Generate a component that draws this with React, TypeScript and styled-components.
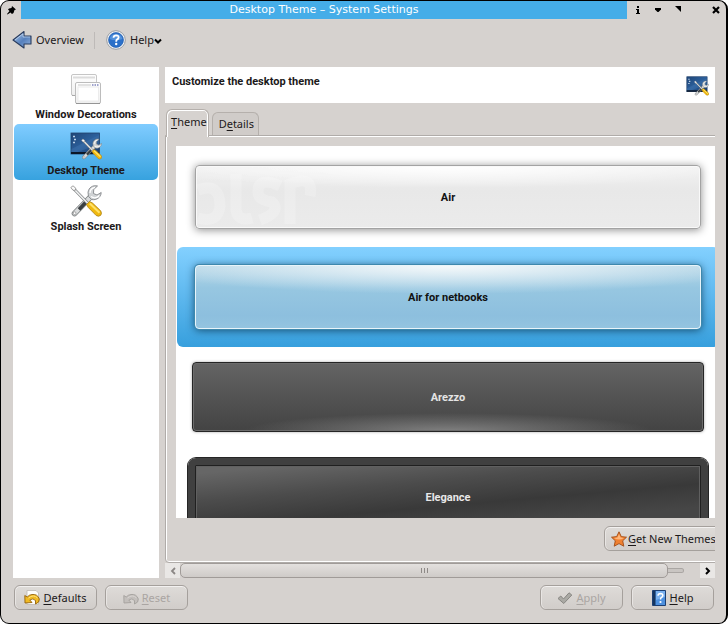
import React, { useState } from 'react';
import styled, { createGlobalStyle, css } from 'styled-components';

const GlobalStyle = createGlobalStyle`
  * { box-sizing: border-box; }
  body { margin: 0; background: #fff; }
  button { font: inherit; color: inherit; background: none; border: 0; padding: 0; margin: 0; white-space: nowrap; }
  h1, h2 { margin: 0; font: inherit; }
  svg { display: block; flex: none; }
  u { text-underline-offset: 2px; }
`;

const boldText = css`
  font: 700 11px/18px Roboto, "Noto Sans", sans-serif;
`;

const Window = styled.div`
  height: 100vh;
  min-height: 480px;
  display: flex;
  flex-direction: column;
  border: 1px solid #000;
  border-right-width: 2px;
  border-radius: 9px;
  overflow: hidden;
  background: #d6d2cf;
  color: #1c191a;
  font: 11px/16px "Noto Sans", "Open Sans", sans-serif;
`;

const TitleBar = styled.header`
  display: flex;
  align-items: center;
  height: 18px;
  flex: none;
`;

const TitleButton = styled.button`
  width: 20px;
  height: 18px;
  display: flex;
  align-items: center;
  justify-content: center;
`;

const TitleText = styled.h1`
  && {
    flex: 1;
    height: 18px;
    text-align: center;
    background: #45ade8;
    color: #fff;
    font: 11px/18px "DejaVu Sans", sans-serif;
  }
`;

const TitleActions = styled.div`
  display: flex;
  width: 99px;
  padding-left: 1px;
`;

const Toolbar = styled.nav`
  display: flex;
  align-items: center;
  height: 42px;
  flex: none;
  padding-left: 11px;
`;

const ToolButton = styled.button`
  display: flex;
  align-items: center;
  gap: 4px;
`;

const ToolDivider = styled.span`
  width: 1px;
  height: 17px;
  margin: 0 11px 0 10px;
  background: #bebab8;
`;

const Main = styled.main`
  flex: 1;
  min-height: 0;
  display: flex;
  gap: 6px;
  padding: 6px 11px 0 12px;
`;

const Sidebar = styled.nav`
  width: 146px;
  flex: none;
  padding: 1px;
  background: #fff;
`;

const SideItem = styled.button<{ $selected?: boolean }>`
  display: flex;
  flex-direction: column;
  align-items: center;
  justify-content: flex-end;
  width: 100%;
  height: 56px;
  gap: 1px;
  border-radius: 5px;
  background: ${p => (p.$selected ? 'linear-gradient(#80ccff, #37a2df)' : 'none')};
  && { ${boldText} }
`;

const Content = styled.section`
  flex: 1;
  min-width: 0;
  display: flex;
  flex-direction: column;
`;

const ModuleHeader = styled.div`
  display: flex;
  justify-content: space-between;
  height: 36px;
  flex: none;
  padding: 6px 6px 0 7px;
  background: #fff;
`;

const ModuleTitle = styled.h2`
  && { ${boldText} }
`;

const HeaderIcon = styled.div`
  padding-top: 3px;
`;

const TabRow = styled.div`
  display: flex;
  align-items: flex-end;
  gap: 3px;
  height: 32px;
  flex: none;
  padding-left: 1px;
`;

const Tab = styled.button<{ $active?: boolean }>`
  height: 23px;
  padding: 0 4px 0 6px;
  border: 1px solid #b5b0ac;
  border-bottom: 0;
  border-radius: 6px 6px 0 0;
  background: #d0ccc9;
  ${p =>
    p.$active &&
    css`
      height: 28px;
      padding: 0 1px 3px 4px;
      margin-bottom: -2px;
      background: #d6d2cf;
      box-shadow: inset 1px 1px #fff, inset -1px 0 #fff;
      z-index: 1;
    `}
`;

const PaneClip = styled.div`
  flex: 1;
  min-height: 0;
  display: flex;
  overflow: hidden;
`;

const Pane = styled.div`
  flex: none;
  width: calc(100% + 15px);
  display: flex;
  flex-direction: column;
  padding: 10px 10px 11px;
  border: 1px solid #b0aca9;
  border-radius: 0 0 0 4px;
  box-shadow: inset 1px 1px #fff, inset 0 -1px #fff;
`;

const ThemeList = styled.div`
  flex: 1;
  min-height: 0;
  padding: 1px 0 0 1px;
  overflow: hidden;
  background: #fff;
`;

const ThemeRow = styled.button<{ $selected: boolean }>`
  display: flex;
  width: 100%;
  height: 100px;
  border-radius: 6px;
  background: ${p => (p.$selected ? 'linear-gradient(#83d0ff, #379fdd)' : 'none')};
`;

type Look = 'air' | 'netbook' | 'arezzo' | 'elegance';

const looks = {
  air: css`
    margin: 18px;
    border: 1px solid #a3a3a3;
    border-radius: 4px;
    background: radial-gradient(ellipse 60% 22px at 50% 0, #fff, rgba(255, 255, 255, 0)),
      linear-gradient(#f2f2f2, #e8e8e8 40%, #ebebeb);
    box-shadow: 0 1px 8px rgba(0, 0, 0, 0.45), inset 0 0 0 1px #f9f9f9;
  `,
  netbook: css`
    margin: 18px;
    border: 1px solid #e8f4fa;
    border-radius: 4px;
    background: radial-gradient(ellipse 62% 28px at 50% 0, #f4f8fa, rgba(220, 235, 243, 0)),
      linear-gradient(#b8d8e8, #97c7e1 35%, #8dbfde 80%, #94c4e0);
    box-shadow: 0 0 0 1px #3e88ad, 0 1px 9px rgba(0, 36, 60, 0.75);
  `,
  arezzo: css`
    margin: 15px;
    border: 1px solid #252525;
    border-radius: 4px;
    color: #e4e4e4;
    background: radial-gradient(ellipse 40% 18px at 50% 100%, #808080, rgba(100, 100, 100, 0)),
      linear-gradient(#646464, #434343);
    box-shadow: 0 0 3px rgba(0, 0, 0, 0.35), inset 0 0 0 1px #6c6c6c;
  `,
  elegance: css`
    margin: 11px;
    border: 7px solid #404040;
    border-radius: 8px;
    color: #e8e8e8;
    background: linear-gradient(175deg, #666 8%, #4c4c4c 34%, #393939 58%, #464646 80%);
    box-shadow: inset 0 0 0 1px #202020, inset 0 0 0 2px #606060, 0 0 0 1px #252525;
  `,
};

const ThemeCard = styled.span<{ $look: Look }>`
  position: relative;
  flex: 1;
  display: flex;
  align-items: center;
  justify-content: center;
  overflow: hidden;
  padding-top: 2px;
  color: #111;
  ${boldText}
  ${p => looks[p.$look]}
`;

const Watermark = styled.svg`
  position: absolute;
  left: 0;
  top: 0;
`;

const PaneFooter = styled.div`
  display: flex;
  justify-content: flex-end;
  flex: none;
  padding-top: 8px;
  margin-right: -10px;
`;

const PushButton = styled.button<{ $wide?: boolean }>`
  display: flex;
  align-items: center;
  justify-content: center;
  gap: 3px;
  width: ${p => (p.$wide ? '125px' : '83px')};
  height: 25px;
  border: 1px solid #a5a09c;
  border-radius: 6px;
  background: linear-gradient(#dedbd8, #d1cdca);
  box-shadow: inset 0 1px #f3f1f0, inset 1px 0 #e8e5e3;
  ${p => p.$wide && css`justify-content: flex-start; gap: 1px; padding-left: 6px;`}
  &:disabled { color: #aaa5a2; }
`;

const ScrollBar = styled.div`
  display: flex;
  align-items: center;
  height: 15px;
  flex: none;
`;

const ScrollArrow = styled.button`
  display: flex;
  align-items: center;
  justify-content: center;
  width: 15px;
  height: 15px;
  flex: none;
  background: #e9e7e5;
`;

const ScrollTrack = styled.div`
  flex: 1;
  display: flex;
  align-items: center;
`;

const ScrollThumb = styled.div`
  flex: 1;
  display: flex;
  align-items: center;
  justify-content: center;
  gap: 2px;
  height: 15px;
  border: 1px solid #a09b98;
  border-radius: 5px;
  background: linear-gradient(#e3e0de, #cfcbc8);
`;

const Grip = styled.i`
  width: 1px;
  height: 5px;
  background: #8e8a87;
`;

const ScrollGroove = styled.div`
  width: 16px;
  height: 5px;
  margin-right: 16px;
  border: 1px solid #aaa6a3;
  border-left: 0;
  border-radius: 0 3px 3px 0;
  background: #c9c5c2;
`;

const Footer = styled.footer`
  display: flex;
  gap: 8px;
  flex: none;
  padding: 7px 12px 13px 13px;
`;

const Spacer = styled.span`
  flex: 1;
`;

const Tools = () => (
  <>
    <path d="M4.500 28.500 L20 12.500" stroke="#7c8082" strokeWidth="5.600" strokeLinecap="round" />
    <path d="M4.500 28.500 L20 12.500" stroke="#d9dbdc" strokeWidth="4" strokeLinecap="round" />
    <path d="M9 24.500 L17 16" stroke="#3a3f42" strokeWidth="3.600" />
    <circle cx="4.600" cy="28.200" r="1.400" fill="#fff" stroke="#888" strokeWidth=".7" />
    <path
      d="M27.500 1 C23 -.2 18.500 2.500 18 7.500 L18.500 11.500 L21.500 14.500 C26.500 15.500 31 12.500 31.200 7.500 L27 10 L23.500 8.500 L23.700 4.500 Z"
      fill="#cfd2d4"
      stroke="#84888b"
      strokeWidth=".9"
      strokeLinejoin="round"
    />
    <path d="M20 8 C20 5 22 3 25 2.400 M21 11.500 C24 13.600 27.500 13 29.300 10.500" fill="none" stroke="#fff" strokeWidth="1.300" />
    <path d="M3 3 L18 18.500" stroke="#808486" strokeWidth="3" />
    <path d="M3 3 L18 18.500" stroke="#f0f1f1" strokeWidth="1.700" />
    <path d="M.8 2.500 L3 .8 L5.800 3.200 L5.300 5.300 L3 5.300 Z" fill="#fafafa" stroke="#8c8c8c" strokeWidth=".8" />
    <path d="M16.500 19.500 L19.500 16.500 L22.500 18 L30.700 25.800 Q32.300 28.500 30.600 30.400 Q28.500 32 26.200 30.500 L18.300 22.500 Z" fill="#f0b90e" stroke="#a9801c" strokeWidth=".8" />
    <path d="M19.800 18.600 L29.500 27.800" stroke="#ffe26a" strokeWidth="2" />
  </>
);

const WindowsIcon = () => (
  <svg width="32" height="32" viewBox="0 0 32 32">
    <defs>
      <linearGradient id="pane" x1="0" y1="0" x2="0" y2="1">
        <stop offset="0" stopColor="#fff" />
        <stop offset="1" stopColor="#efefef" />
      </linearGradient>
    </defs>
    <rect x="1.500" y="1.500" width="25" height="21" rx="1.500" fill="url(#pane)" stroke="#c6c6c6" />
    <path d="M3 4.500h22" stroke="#dcdcdc" strokeWidth="2" />
    <path d="M2 22.500h24" stroke="#aaa" />
    <rect x="5.500" y="9.500" width="25" height="21" rx="1.500" fill="url(#pane)" stroke="#bcbcbc" />
    <rect x="8" y="14" width="20.500" height="14" fill="#fff" stroke="#ececec" />
    <path d="M8 12h13" stroke="#e2e2e2" strokeWidth="2" />
    <path d="M22 12h1.500m1 0h1.500m1 0h1.500" stroke="#9fa3cc" strokeWidth="1.800" />
    <path d="M6 30.500h24" stroke="#959595" />
  </svg>
);

const DesktopIcon = ({ width, height }: { width: number; height: number }) => (
  <svg width={width} height={height} viewBox="0 0 32 28">
    <defs>
      <linearGradient id="desk" x1="0" y1="0" x2="1" y2="1">
        <stop offset="0" stopColor="#1f4677" />
        <stop offset=".5" stopColor="#2c5f9b" />
        <stop offset="1" stopColor="#16386a" />
      </linearGradient>
    </defs>
    <rect x="1" y="1" width="28.500" height="21" fill="url(#desk)" stroke="#24436c" strokeWidth=".8" />
    <path d="M1.500 17 L29 3 V12 L8 20 H1.500z" fill="#4379b2" opacity=".4" />
    <path d="M3 4.500h2m-1 3h2m-3 3h2" stroke="#bfd2e8" strokeWidth="1.500" />
    <path d="M1 21h28" stroke="#0c1728" strokeWidth="1.800" />
    <g transform="translate(11 6.500) scale(.66)">
      <Tools />
    </g>
  </svg>
);

const BackIcon = () => (
  <svg width="20" height="20" viewBox="0 0 20 20">
    <defs>
      <linearGradient id="arrow" x1="0" y1="0" x2="1" y2="1">
        <stop offset="0" stopColor="#b4cdec" />
        <stop offset=".55" stopColor="#5680bd" />
        <stop offset="1" stopColor="#94b4dd" />
      </linearGradient>
    </defs>
    <path d="M1 10 L12 1.500 V6 H19 V14 H12 V18 Z" fill="url(#arrow)" stroke="#2a3c5e" strokeWidth="1.100" strokeLinejoin="round" />
    <path d="M3 10 L11 3.800 V7 H18" fill="none" stroke="#d5e5f8" strokeWidth=".6" />
  </svg>
);

const HelpIcon = () => (
  <svg width="20" height="20" viewBox="0 0 20 20">
    <circle cx="10" cy="10" r="9.300" fill="#f6f7f8" stroke="#8e949b" strokeWidth=".9" />
    <circle cx="10" cy="10" r="7.500" fill="#2b70c9" stroke="#1d58a8" strokeWidth=".6" />
    <path d="M3.500 9 A6.700 6.700 0 0 1 16.500 9 Q10 11.500 3.500 9" fill="#6ea9ea" opacity=".6" />
    <path d="M7.500 7.700 Q7.700 5.300 10.100 5.300 Q12.700 5.400 12.600 7.500 Q12.400 8.900 10.900 9.600 Q10.200 10.100 10.200 11.700" fill="none" stroke="#fff" strokeWidth="1.800" />
    <circle cx="10.200" cy="14" r="1.200" fill="#fff" />
  </svg>
);

const UndoIcon = ({ muted }: { muted?: boolean }) => (
  <svg width="16" height="16" viewBox="0 0 16 16">
    {!muted && <path d="M3 .500 H12 L14.500 3 V14.500 H3 Z" fill="#fdfdfc" stroke="#bcb9b4" strokeWidth=".8" />}
    <path
      d="M.8 5.500 L1 13 L8 12.500 L5.800 10 Q9 7.500 11.500 10.500 L11.500 14 Q15.800 12.500 15.300 9 Q13.500 3.800 8 4.500 Q5.200 4.800 3.200 7 Z"
      fill={muted ? '#c3bfbc' : '#f0ba24'}
      stroke={muted ? '#a4a09d' : '#94620c'}
      strokeWidth=".9"
      strokeLinejoin="round"
    />
    <path d="M4.500 8 Q9.500 4 13.500 8" fill="none" stroke={muted ? '#d8d4d1' : '#ffe27c'} />
  </svg>
);

const StarIcon = () => (
  <svg width="16" height="16" viewBox="0 0 16 16">
    <path d="M8 .8 L10.300 5.600 L15.500 6.200 L11.700 9.800 L12.800 15.200 L8 12.600 L3.200 15.200 L4.300 9.800 L.5 6.200 L5.700 5.600 Z" fill="#f08030" stroke="#a04c16" strokeWidth=".9" strokeLinejoin="round" />
    <path d="M8 3 L9.600 6.600 L13 7 Q8 10 3 7 L6.400 6.600 Z" fill="#ffb67a" />
  </svg>
);

const CheckIcon = () => (
  <svg width="16" height="16" viewBox="0 0 16 16">
    <path d="M1 8.500 L3.800 6 L6.500 9 L12 2.800 L14.800 5 L6.800 13.500 Z" fill="#aaa9a4" stroke="#888783" strokeLinejoin="round" />
  </svg>
);

const BookIcon = () => (
  <svg width="15" height="16" viewBox="0 0 15 16">
    <path d="M.5 .5 H13.500 V15.500 H.5 Z" fill="#4d90df" stroke="#1c3f73" />
    <path d="M1 1 H3.500 V15 H1 Z" fill="#15345f" />
    <path d="M4 1 H13 V7 L4 10Z" fill="#7ab1ef" />
    <path d="M6 5.700 Q6.200 3.500 8.500 3.500 Q11 3.600 10.800 5.600 Q10.600 6.900 9.200 7.600 Q8.500 8.200 8.500 9.500" fill="none" stroke="#fff" strokeWidth="1.500" />
    <circle cx="8.500" cy="12" r="1.100" fill="#fff" />
  </svg>
);

const themes: { name: string; look: Look }[] = [
  { name: 'Air', look: 'air' },
  { name: 'Air for netbooks', look: 'netbook' },
  { name: 'Arezzo', look: 'arezzo' },
  { name: 'Elegance', look: 'elegance' },
];

export default function App() {
  const [selected, setSelected] = useState('Air for netbooks');
  return (
    <>
      <GlobalStyle />
      <Window>
        <TitleBar>
          <TitleButton aria-label="Pin window">
            <svg width="9" height="9" viewBox="0 0 9 9"><path d="M5 0 L9 3.500 L7.500 4 L6.500 7 L5 8 L3.500 6.500 L.5 8.500 L0 8 L2.500 5 L1 3.500 L2 2.500 L4.500 2 Z" /></svg>
          </TitleButton>
          <TitleText>Desktop Theme – System Settings</TitleText>
          <TitleActions>
            <TitleButton aria-label="Window information">
              <svg width="4" height="8" viewBox="0 0 4 8"><path d="M1 0h2v2H1zM0 3h3v4h1v1H0V7h1V4H0z" /></svg>
            </TitleButton>
            <TitleButton aria-label="Minimize">
              <svg width="6" height="4" viewBox="0 0 6 4"><path d="M0 0h6v1.500L3.500 4h-1L0 1.500z" /></svg>
            </TitleButton>
            <TitleButton aria-label="Maximize">
              <svg width="6" height="8" viewBox="0 0 6 8"><path d="M0 0h6v6z" /></svg>
            </TitleButton>
            <Spacer />
            <TitleButton aria-label="Close">
              <svg width="8" height="8" viewBox="0 0 8 8"><path d="M1 1l6 6M7 1L1 7" stroke="#000" strokeWidth="2.200" /></svg>
            </TitleButton>
          </TitleActions>
        </TitleBar>

        <Toolbar>
          <ToolButton><BackIcon />Overview</ToolButton>
          <ToolDivider />
          <ToolButton>
            <HelpIcon />
            <span>Help</span>
          </ToolButton>
          <svg width="8" height="8" viewBox="0 0 8 8"><path d="M1 3.500 L4 6.500 L7 3.500" fill="none" stroke="#000" strokeWidth="2" /></svg>
        </Toolbar>

        <Main>
          <Sidebar>
            <SideItem><WindowsIcon />Window Decorations</SideItem>
            <SideItem $selected><DesktopIcon width={32} height={30} />Desktop Theme</SideItem>
            <SideItem>
              <svg width="32" height="32" viewBox="0 0 32 32"><Tools /></svg>
              Splash Screen
            </SideItem>
          </Sidebar>

          <Content>
            <ModuleHeader>
              <ModuleTitle>Customize the desktop theme</ModuleTitle>
              <HeaderIcon><DesktopIcon width={23} height={20} /></HeaderIcon>
            </ModuleHeader>
            <TabRow role="tablist">
              <Tab role="tab" aria-selected $active><u>T</u>heme</Tab>
              <Tab role="tab" aria-selected={false}>D<u>e</u>tails</Tab>
            </TabRow>
            <PaneClip>
              <Pane role="tabpanel">
                <ThemeList>
                  {themes.map(t => (
                    <ThemeRow
                      key={t.name}
                      aria-pressed={selected === t.name}
                      $selected={selected === t.name}
                      onClick={() => setSelected(t.name)}
                    >
                      <ThemeCard $look={t.look}>
                        {t.look === 'air' && (
                          <Watermark width="124" height="62" viewBox="0 0 124 62" fill="none" stroke="#fff" strokeWidth="11" opacity=".2">
                            <path d="M2 24 Q24 16 24 40 Q22 58 2 52 M40 8 V44 Q42 56 56 52 M84 20 Q62 10 62 26 Q62 34 76 36 Q86 46 64 54 M94 58 V18 Q118 8 114 30" />
                          </Watermark>
                        )}
                        {t.name}
                      </ThemeCard>
                    </ThemeRow>
                  ))}
                </ThemeList>
                <PaneFooter>
                  <PushButton $wide><StarIcon /><span><u>G</u>et New Themes...</span></PushButton>
                </PaneFooter>
              </Pane>
            </PaneClip>
            <ScrollBar>
              <ScrollArrow aria-label="Scroll left">
                <svg width="6" height="8" viewBox="0 0 6 8"><path d="M5 1 L2 4 L5 7" fill="none" stroke="#8b8785" strokeWidth="1.800" /></svg>
              </ScrollArrow>
              <ScrollTrack>
                <ScrollThumb><Grip /><Grip /><Grip /></ScrollThumb>
                <ScrollGroove />
              </ScrollTrack>
              <ScrollArrow aria-label="Scroll right">
                <svg width="6" height="8" viewBox="0 0 6 8"><path d="M1 1 L4 4 L1 7" fill="none" stroke="#000" strokeWidth="2" /></svg>
              </ScrollArrow>
            </ScrollBar>
          </Content>
        </Main>

        <Footer>
          <PushButton><UndoIcon /><span><u>D</u>efaults</span></PushButton>
          <PushButton disabled><UndoIcon muted /><span><u>R</u>eset</span></PushButton>
          <Spacer />
          <PushButton disabled><CheckIcon /><span><u>A</u>pply</span></PushButton>
          <PushButton><BookIcon /><span><u>H</u>elp</span></PushButton>
        </Footer>
      </Window>
    </>
  );
}
